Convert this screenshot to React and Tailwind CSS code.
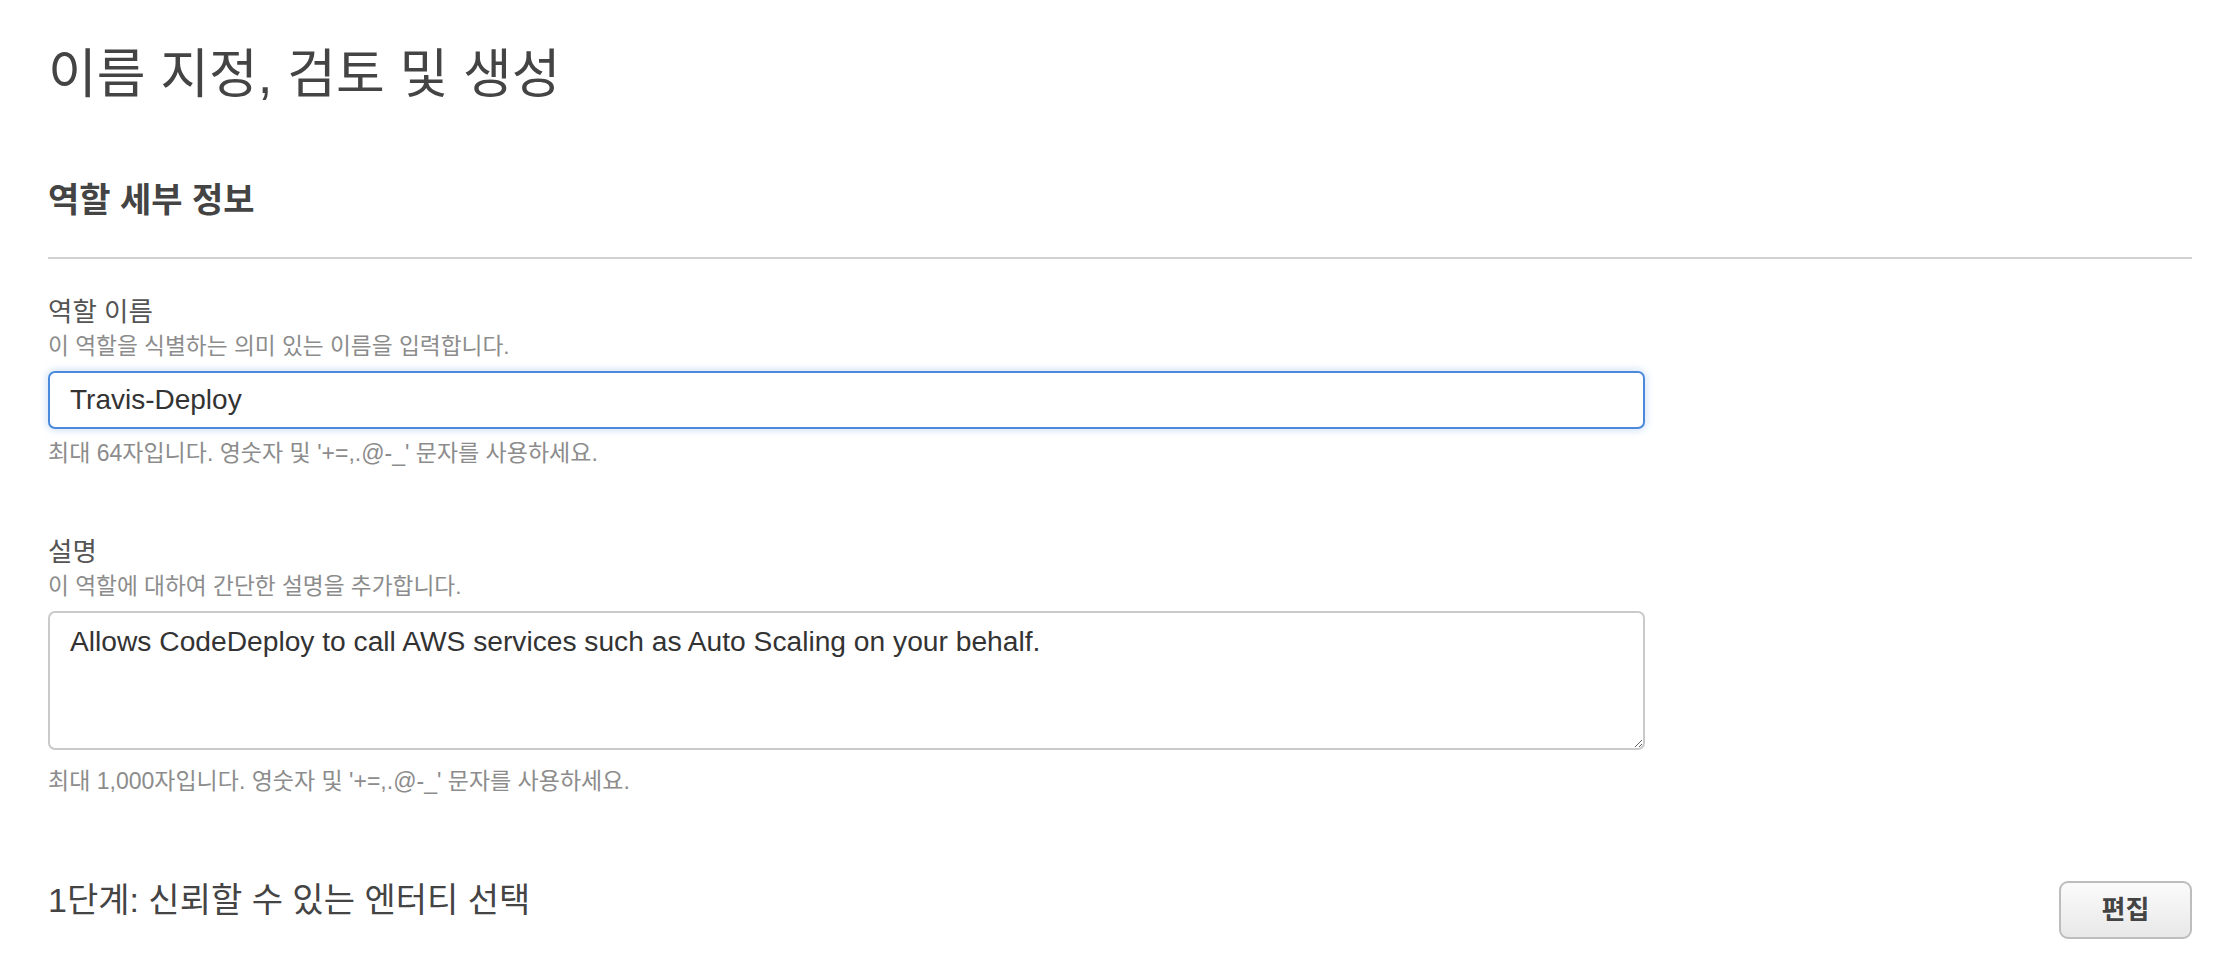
export default function App() {
  return (
    <div className="min-h-screen bg-white pl-[48px] pr-[26px] pt-[47px] font-['Liberation_Sans','Noto_Sans_CJK_KR',sans-serif]">
      <h1 className="text-[53px] leading-[56px] font-normal text-[#444444]">
        이름 지정, 검토 및 생성
      </h1>

      <h2 className="mt-[77px] text-[34px] leading-[40px] font-bold text-[#444444]">
        역할 세부 정보
      </h2>

      <div className="mt-[37px] h-[2px] bg-[#d2d2d2]" />

      <div className="mt-[37px] text-[26.5px] leading-[32px] text-[#545454]">역할 이름</div>
      <div className="mt-[4px] text-[22.7px] leading-[28px] text-[#8c8c8c]">
        이 역할을 식별하는 의미 있는 이름을 입력합니다.
      </div>
      <input
        readOnly
        value="Travis-Deploy"
        className="mt-[11px] block w-[1597px] h-[58px] rounded-[7px] border-2 border-[#4a89dc] bg-white pl-[20px] text-[28px] leading-[32px] text-[#333333] outline-none shadow-[0_0_7px_2px_rgba(74,137,220,0.22)]"
      />
      <div className="mt-[10px] text-[23px] leading-[28px] text-[#8c8c8c]">
        최대 64자입니다. 영숫자 및 '+=,.@-_' 문자를 사용하세요.
      </div>

      <div className="mt-[69px] text-[26.5px] leading-[32px] text-[#545454]">설명</div>
      <div className="mt-[4px] text-[22.7px] leading-[28px] text-[#8c8c8c]">
        이 역할에 대하여 간단한 설명을 추가합니다.
      </div>
      <textarea
        readOnly
        defaultValue="Allows CodeDeploy to call AWS services such as Auto Scaling on your behalf."
        className="mt-[11px] block w-[1597px] h-[139px] rounded-[7px] border-2 border-[#cacaca] bg-white px-[20px] pt-[12px] text-[28.2px] leading-[32px] text-[#333333] outline-none resize-y"
      />
      <div className="mt-[17px] text-[23px] leading-[28px] text-[#8c8c8c]">
        최대 1,000자입니다. 영숫자 및 '+=,.@-_' 문자를 사용하세요.
      </div>

      <div className="mt-[85px] flex items-start justify-between">
        <h2 className="text-[34px] leading-[40px] font-normal text-[#444444]">
          1단계: 신뢰할 수 있는 엔터티 선택
        </h2>
        <button className="mt-[1px] flex h-[58px] w-[133px] items-center justify-center rounded-[9px] border-2 border-[#bdbdbd] bg-gradient-to-b from-[#fbfbfb] to-[#e8e8e8] text-[26px] font-bold text-[#444444]">
          편집
        </button>
      </div>
    </div>
  );
}
